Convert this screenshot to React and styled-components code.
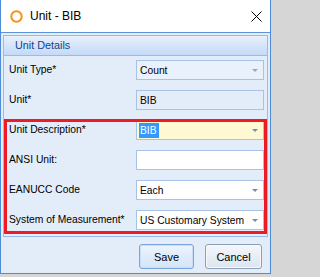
import React from 'react';
import styled, { createGlobalStyle } from 'styled-components';

const GlobalStyle = createGlobalStyle`
  html, body {
    margin: 0;
    padding: 0;
    background: #d6d6d6;
  }
  body {
    font-family: "Liberation Sans", Arial, sans-serif;
    font-size: 10.3px;
    color: #000;
  }
`;

const Window = styled.div`
  box-sizing: border-box;
  width: 271px;
  height: 274px;
  border: 1px solid #4f8bd6;
  border-top: none;
  background: #e3edfa;
  display: flex;
  flex-direction: column;
`;

const TitleBar = styled.div`
  height: 32px;
  border-bottom: 1px solid #5d93d8;
  background: #fff;
  display: flex;
  align-items: center;
  padding: 0 8px 0 9px;
  gap: 7px;
`;

const Title = styled.span`
  flex: 1;
  font-size: 12px;
  color: #000;
`;

const Client = styled.div`
  flex: 1;
  display: flex;
  flex-direction: column;
  padding: 2px 2px 0 2px;
`;

const Group = styled.div`
  position: relative;
  box-sizing: border-box;
  height: 202px;
  border: 1px solid #99bbe8;
  display: flex;
  flex-direction: column;
`;

const GroupHeader = styled.div`
  height: 19px;
  border-bottom: 1px solid #99bbe8;
  background: linear-gradient(#e8f0fc, #c4daf8);
  color: #15428b;
  font-size: 10.8px;
  line-height: 19px;
  padding-left: 11px;
`;

const Rows = styled.div`
  display: grid;
  grid-template-columns: 127px 128px;
  grid-auto-rows: 20px;
  row-gap: 10px;
  padding: 4px 3px 0 5px;
`;

const Label = styled.div`
  line-height: 20px;
  white-space: nowrap;
`;

const Field = styled.div`
  box-sizing: border-box;
  height: 20px;
  border: 1px solid #a7c2e6;
  background: ${(p) => p.$bg || '#fff'};
  display: flex;
  align-items: center;
  padding: 0 5px 0 3px;
  white-space: nowrap;
  overflow: hidden;
`;

const Value = styled.span`
  flex: 1;
  display: flex;
`;

const Selected = styled.span`
  background: #3399ff;
  color: #fff;
  padding: 0 2px 0 1px;
  margin-left: -1px;
  line-height: 15px;
`;

const Arrow = styled.span`
  flex: none;
  width: 0;
  height: 0;
  border-left: 3px solid transparent;
  border-right: 3px solid transparent;
  border-top: 3px solid ${(p) => p.$color || '#6f8fb6'};
  margin-top: 1px;
`;

const Highlight = styled.div`
  position: absolute;
  left: 0;
  top: 83px;
  width: 263px;
  height: 115px;
  box-sizing: border-box;
  border: 3px solid #ed1c24;
  pointer-events: none;
`;

const Buttons = styled.div`
  display: flex;
  justify-content: flex-end;
  gap: 11px;
  padding: 7px 6px 0 0;
`;

const Button = styled.button`
  box-sizing: border-box;
  width: ${(p) => p.$width}px;
  height: 25px;
  border-radius: 3px;
  font-family: "Liberation Sans", Arial, sans-serif;
  font-size: 11px;
  color: #000;
  padding: 0;
  border: 1px solid ${(p) => (p.$focused ? '#7aa6dc' : '#8b9fbb')};
  background: ${(p) =>
    p.$focused
      ? 'linear-gradient(#edf4fd, #d4e4f8)'
      : 'linear-gradient(#f4f7fb, #dde5f0)'};
  box-shadow: ${(p) => (p.$focused ? 'inset 0 0 0 1px #c9ddf6' : 'inset 0 0 0 1px #f6f8fb')};
`;

const TitleIcon = () => (
  <svg width="13" height="13" viewBox="0 0 13 13">
    <circle cx="6.5" cy="6.5" r="5.2" fill="none" stroke="#f5921e" strokeWidth="2" />
  </svg>
);

const CloseIcon = () => (
  <svg width="11" height="11" viewBox="0 0 11 11">
    <path d="M0.5 0.5L10.5 10.5M10.5 0.5L0.5 10.5" stroke="#000" strokeWidth="1" />
  </svg>
);

const rows = [
  { label: 'Unit Type*', value: 'Count', bg: '#e9f1fc', combo: true, arrow: '#a7a7a7' },
  { label: 'Unit*', value: 'BIB', bg: '#e3edfa' },
  { label: 'Unit Description*', value: 'BIB', bg: '#fef9d3', combo: true, selected: true },
  { label: 'ANSI Unit:', value: '' },
  { label: 'EANUCC Code', value: 'Each', combo: true },
  { label: 'System of Measurement*', value: 'US Customary System', combo: true },
];

const App = () => (
  <>
    <GlobalStyle />
    <Window>
      <TitleBar>
        <TitleIcon />
        <Title>Unit - BIB</Title>
        <CloseIcon />
      </TitleBar>
      <Client>
        <Group>
          <GroupHeader>Unit Details</GroupHeader>
          <Rows>
            {rows.map((r) => (
              <React.Fragment key={r.label}>
                <Label>{r.label}</Label>
                <Field $bg={r.bg}>
                  <Value>{r.selected ? <Selected>{r.value}</Selected> : r.value}</Value>
                  {r.combo && <Arrow $color={r.arrow} />}
                </Field>
              </React.Fragment>
            ))}
          </Rows>
          <Highlight />
        </Group>
        <Buttons>
          <Button $width={55} $focused>Save</Button>
          <Button $width={57}>Cancel</Button>
        </Buttons>
      </Client>
    </Window>
  </>
);

export default App;
